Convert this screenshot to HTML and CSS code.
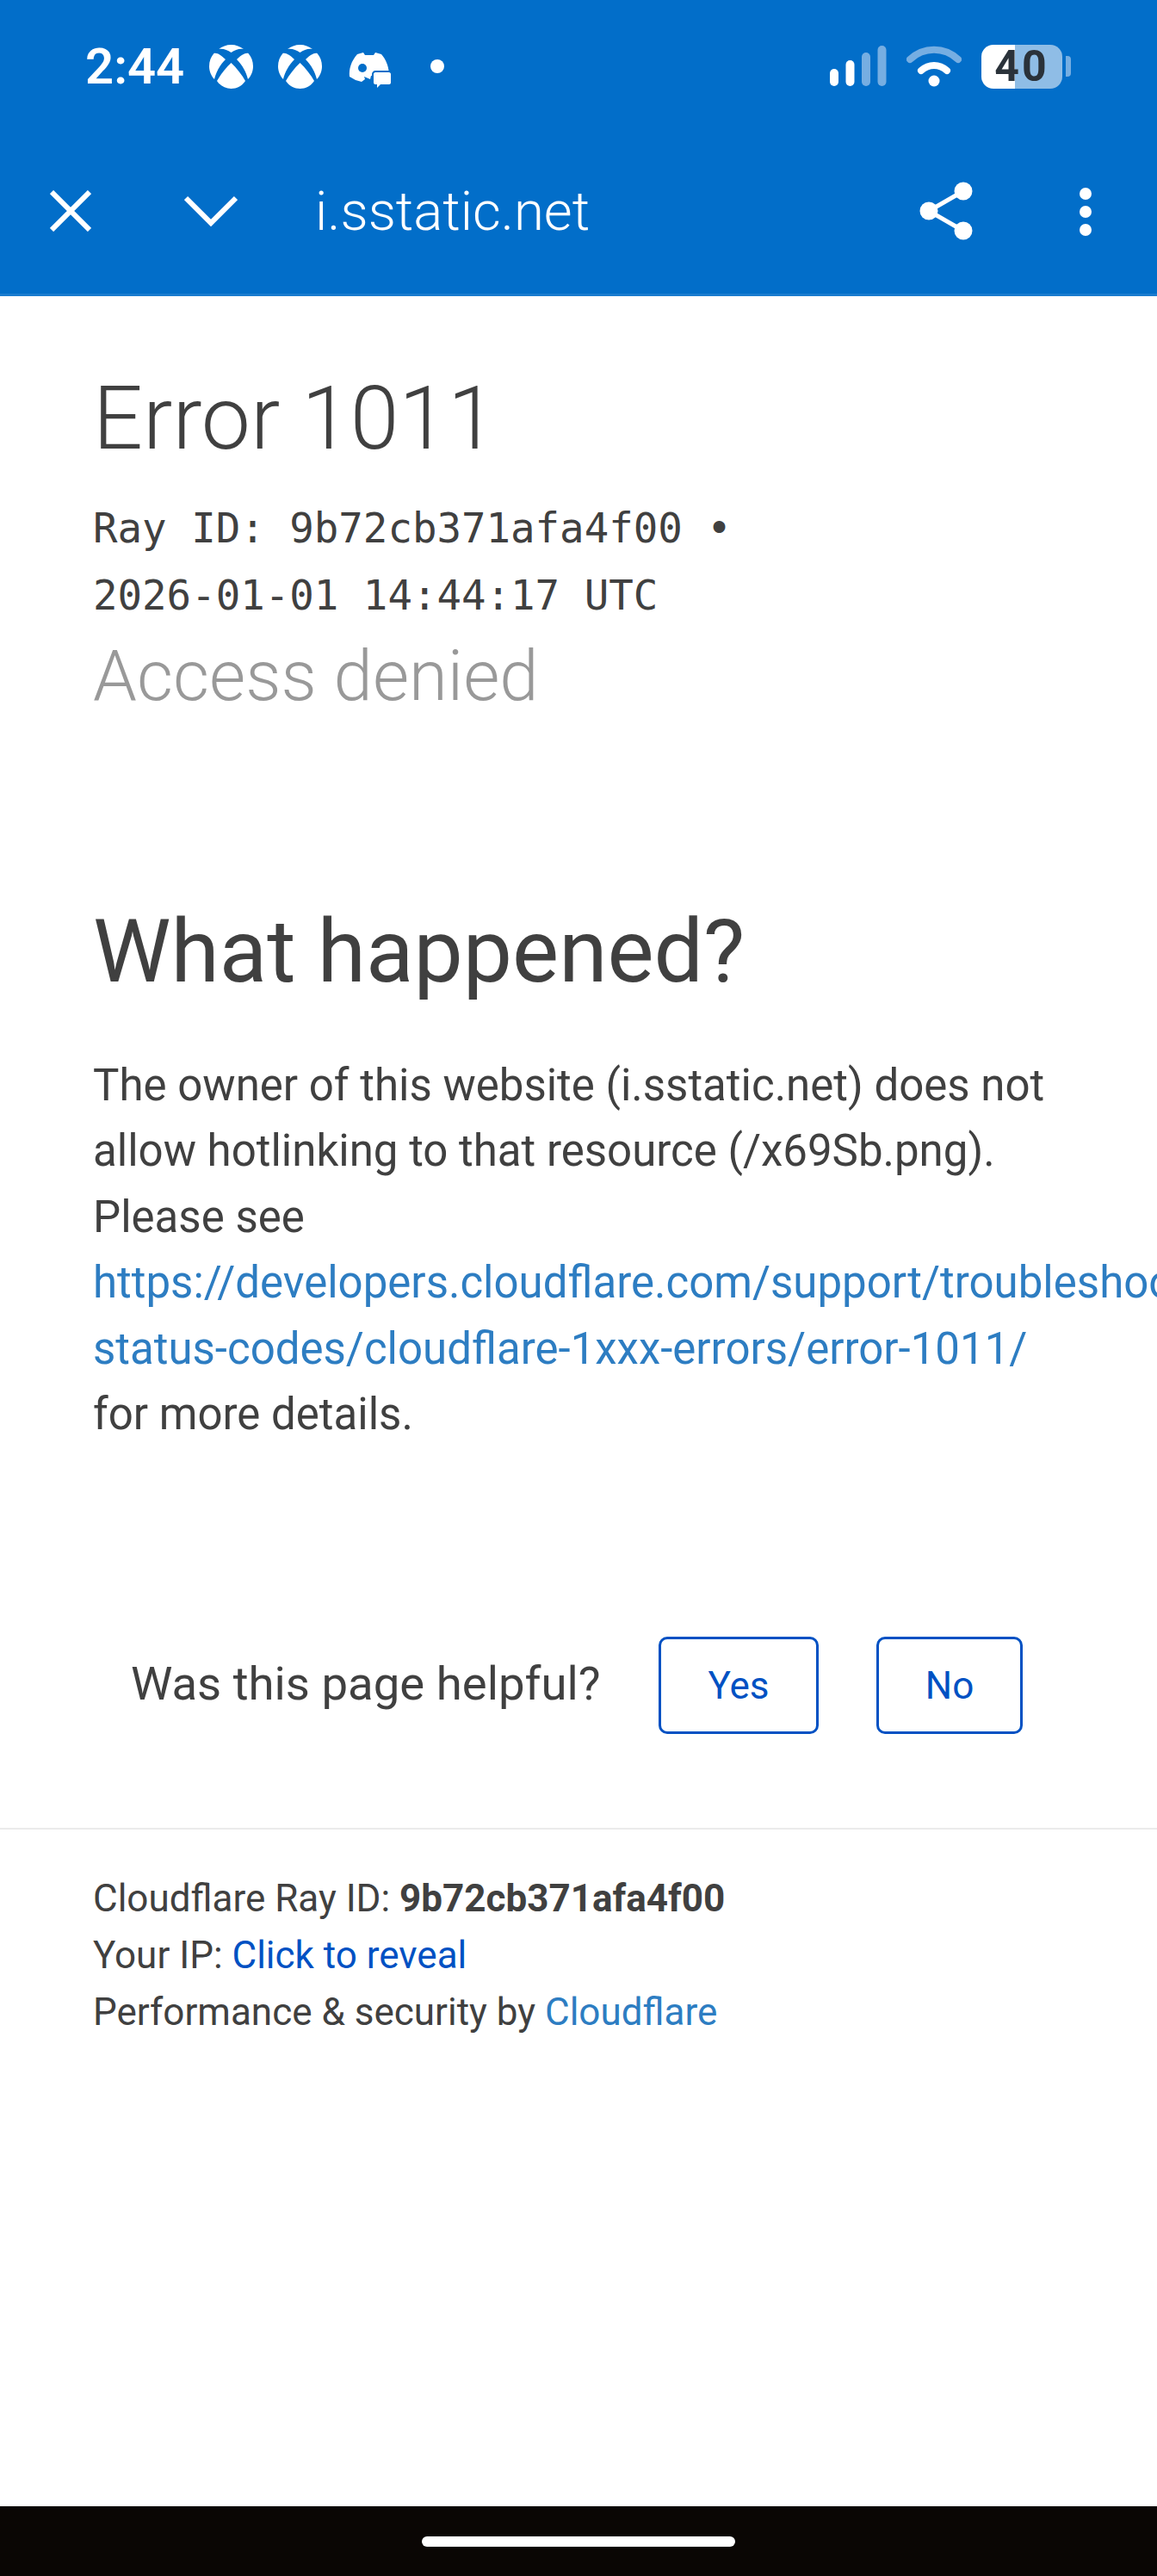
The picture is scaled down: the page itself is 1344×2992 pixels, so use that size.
FILE: index.html
```html
<!DOCTYPE html>
<html lang="en">
<head>
  <meta charset="UTF-8">
  <meta name="viewport" content="width=device-width, initial-scale=1.0">
  <title>Error 1011</title>
  <link rel="stylesheet" href="styles.css">
</head>
<body>
  <div class="app_wrapper">
    <header class="top_bar">
      <div class="status_bar">
        <div class="status_left">
          <span class="clock">2:44</span>
          <svg class="xbox_icon" viewBox="0 0 51 51"><path fill="#fff" d="M25.500 0C31 0 36 2 40 5 35 4 30 6 25.500 9 21 6 16 4 11 5 15 2 20 0 25.500 0Z"/><path fill="#fff" d="M5.500 10C9 9 14 12 19 17 12 24 8 32 6 40 2 36 0 30 0 25 0 19 2 14 5.500 10Z"/><path fill="#fff" d="M45.500 10C42 9 37 12 32 17 39 24 43 32 45 40 49 36 51 30 51 25 51 19 49 14 45.500 10Z"/><path fill="#fff" d="M25.500 21C32 27 38 35 42 42 38 48 32 51 25.500 51 19 51 13 48 9 42 13 35 19 27 25.500 21Z"/></svg>
          <svg class="xbox_icon" viewBox="0 0 51 51"><path fill="#fff" d="M25.500 0C31 0 36 2 40 5 35 4 30 6 25.500 9 21 6 16 4 11 5 15 2 20 0 25.500 0Z"/><path fill="#fff" d="M5.500 10C9 9 14 12 19 17 12 24 8 32 6 40 2 36 0 30 0 25 0 19 2 14 5.500 10Z"/><path fill="#fff" d="M45.500 10C42 9 37 12 32 17 39 24 43 32 45 40 49 36 51 30 51 25 51 19 49 14 45.500 10Z"/><path fill="#fff" d="M25.500 21C32 27 38 35 42 42 38 48 32 51 25.500 51 19 51 13 48 9 42 13 35 19 27 25.500 21Z"/></svg>
          <svg class="discord_icon" viewBox="0 0 50 42"><path fill="#fff" d="M10 3 17 1 19 4H29L31 1 38 3C43 9 46 15 47 26L26 28 25 32 18 29 19 32 15 35 8 33 1 29C0 20 3 11 10 3Z"/><circle cx="16" cy="19" r="5" fill="#026ec9"/><path fill="#fff" stroke="#026ec9" stroke-width="4" paint-order="stroke" d="M31 24H47C48 24 49 25 49 26V36C49 37 48 38 47 38H37L33 42V38H31C30 38 29 37 29 36V26C29 25 30 24 31 24Z"/></svg>
          <span class="status_dot"></span>
        </div>
        <div class="status_right">
          <svg class="signal_icon" viewBox="0 0 66 48"><rect x="0" y="27" width="10" height="20" rx="5" fill="#fff"/><rect x="18.500" y="17" width="10" height="30" rx="5" fill="#fff"/><rect x="37" y="8" width="10" height="39" rx="5" fill="#76aee2"/><rect x="55.500" y="0" width="10" height="47" rx="5" fill="#76aee2"/></svg>
          <svg class="wifi_icon" viewBox="0 0 64 48"><path d="M4 16C20 1 44 1 60 16" fill="none" stroke="#76aee2" stroke-width="8" stroke-linecap="round"/><path d="M17 29C26 21 38 21 47 29" fill="none" stroke="#fff" stroke-width="8" stroke-linecap="round"/><circle cx="32" cy="41" r="6.500" fill="#fff"/></svg>
          <div class="battery">
            <div class="battery_body"><span class="battery_level">40</span></div>
            <div class="battery_nub"></div>
          </div>
        </div>
      </div>
      <div class="toolbar">
        <svg class="close_icon" viewBox="0 0 48 48"><path d="M2 2 46 46M46 2 2 46" stroke="#fff" stroke-width="6" fill="none"/></svg>
        <svg class="chevron_icon" viewBox="0 0 62 36"><path d="M2 3 31 32 60 3" stroke="#fff" stroke-width="6" fill="none"/></svg>
        <span class="page_host">i.sstatic.net</span>
        <svg class="share_icon" viewBox="0 0 62 68"><path d="M51 11 11 34 51 57" stroke="#fff" stroke-width="5" fill="none"/><circle cx="51" cy="11" r="10.500" fill="#fff"/><circle cx="11" cy="34" r="10.500" fill="#fff"/><circle cx="51" cy="57" r="10.500" fill="#fff"/></svg>
        <svg class="menu_icon" viewBox="0 0 14 56"><circle cx="7" cy="7" r="7" fill="#fff"/><circle cx="7" cy="28" r="7" fill="#fff"/><circle cx="7" cy="49" r="7" fill="#fff"/></svg>
      </div>
    </header>

    <main class="main_wrapper">
      <section class="error_head">
        <h1>Error 1011</h1>
        <div class="ray_info">Ray ID: 9b72cb371afa4f00 •<br>2026-01-01 14:44:17 UTC</div>
        <h2 class="error_sub">Access denied</h2>
      </section>
      <section class="what_wrap">
        <h2>What happened?</h2>
        <p>The owner of this website (i.sstatic.net) does not allow hotlinking to that resource (/x69Sb.png). Please see <a class="doc_link" href="#">https://developers.cloudflare.com/support/troubleshooting/http-status-codes/cloudflare-1xxx-errors/error-1011/</a> for more details.</p>
      </section>
      <div class="feedback_wrap">
        <span class="feedback_text">Was this page helpful?</span>
        <button class="feedback_btn yes_btn">Yes</button>
        <button class="feedback_btn no_btn">No</button>
      </div>
      <footer class="footer_wrap">
        <div>Cloudflare Ray ID: <strong>9b72cb371afa4f00</strong></div>
        <div>Your IP: <a class="reveal_link" href="#">Click to reveal</a></div>
        <div>Performance &amp; security by <a class="doc_link" href="#">Cloudflare</a></div>
      </footer>
    </main>

    <div class="nav_bar"><span class="home_pill"></span></div>
  </div>
</body>
</html>
```
FILE: styles.css
```css
* {
  font-family: Roboto, "Liberation Sans", sans-serif;
  box-sizing: border-box;
}
body {
  margin: 0;
  background: #fff;
  overflow: hidden;
}
.app_wrapper {
  display: flex;
  flex-direction: column;
  width: 1344px;
  height: 2992px;
  overflow: hidden;
}

/* blue header */
.top_bar {
  height: 344px;
  flex: none;
  background: #026ec9;
  border-bottom: 3px solid #1a7ccf;
}
.status_bar {
  display: flex;
  justify-content: space-between;
  align-items: center;
  height: 154px;
  padding: 0 100px 0 99px;
}
.status_left,
.status_right {
  display: flex;
  align-items: center;
}
.clock {
  color: #fff;
  font-size: 58px;
  font-weight: 600;
  line-height: 58px;
  width: 144px;
}
.xbox_icon {
  width: 51px;
  height: 51px;
  margin-right: 29px;
}
.discord_icon {
  width: 50px;
  height: 42px;
  margin: 8px 0 0 2px;
}
.status_dot {
  width: 16px;
  height: 16px;
  margin-left: 45px;
  border-radius: 50%;
  background: #fff;
}
.signal_icon {
  width: 66px;
  height: 48px;
  margin-right: 23px;
}
.wifi_icon {
  width: 64px;
  height: 48px;
  margin-right: 23px;
}
.battery {
  display: flex;
  align-items: center;
  gap: 4px;
}
.battery_body {
  display: flex;
  align-items: center;
  justify-content: center;
  width: 94px;
  height: 51px;
  border-radius: 14px;
  background: linear-gradient(90deg, #fff 0 39px, #8fbde6 39px);
}
.battery_level {
  color: #2a323a;
  font-size: 50px;
  font-weight: 700;
  line-height: 51px;
  letter-spacing: 3px;
}
.battery_nub {
  width: 6px;
  height: 24px;
  border-radius: 0 4px 4px 0;
  background: #76aee2;
}
.toolbar {
  display: flex;
  align-items: center;
  height: 187px;
  padding-bottom: 5px;
}
.close_icon {
  width: 48px;
  height: 48px;
  margin-left: 58px;
}
.chevron_icon {
  width: 62px;
  height: 36px;
  margin-left: 108px;
}
.page_host {
  flex: 1;
  margin-left: 90px;
  color: #fff;
  font-size: 63.500px;
  font-weight: 300;
}
.share_icon {
  width: 62px;
  height: 68px;
}
.menu_icon {
  width: 14px;
  height: 56px;
  margin: 2px 76px 0 124px;
}

/* page */
.main_wrapper {
  flex: 1;
  color: #404040;
}
.error_head {
  padding: 0 0 0 108px;
}
h1 {
  margin: 84px 0 0;
  font-size: 102px;
  font-weight: 300;
  line-height: 116px;
  color: #404040;
}
.ray_info {
  margin-top: 31px;
  font-family: "DejaVu Sans Mono", monospace;
  font-size: 47.400px;
  line-height: 78px;
  color: #404040;
}
.error_sub {
  margin: 8px 0 0;
  font-size: 81.500px;
  font-weight: 300;
  line-height: 92px;
  color: #999;
}
.what_wrap {
  padding: 0 0 0 108px;
  width: 1250px;
  margin-top: 214px;
}
.what_wrap h2 {
  margin: 0;
  font-size: 102px;
  font-weight: 400;
  line-height: 120px;
}
.what_wrap p {
  margin: 58px 0 0;
  font-size: 51px;
  line-height: 76.400px;
}
.doc_link {
  color: #2d7dc2;
  text-decoration: none;
}
.feedback_wrap {
  display: flex;
  align-items: center;
  margin-top: 220px;
  padding-left: 152px;
}
.feedback_text {
  font-size: 54.500px;
  width: 613px;
  margin-bottom: 6px;
}
.feedback_btn {
  height: 113px;
  background: #fff;
  border: 3px solid #0051c3;
  border-radius: 10px;
  color: #0051c3;
  font-size: 44px;
  padding: 0;
}
.yes_btn {
  width: 186px;
}
.no_btn {
  width: 170px;
  margin-left: 67px;
}
.footer_wrap {
  margin-top: 109px;
  padding: 47px 0 0 108px;
  border-top: 2px solid #ebebeb;
  font-size: 44px;
  line-height: 66px;
}
.reveal_link {
  color: #0051c3;
  text-decoration: none;
}

/* android nav */
.nav_bar {
  display: flex;
  align-items: center;
  justify-content: center;
  flex: none;
  height: 81px;
  background: #0a0604;
}
.home_pill {
  width: 364px;
  height: 12px;
  border-radius: 6px;
  background: #fff;
}
```
